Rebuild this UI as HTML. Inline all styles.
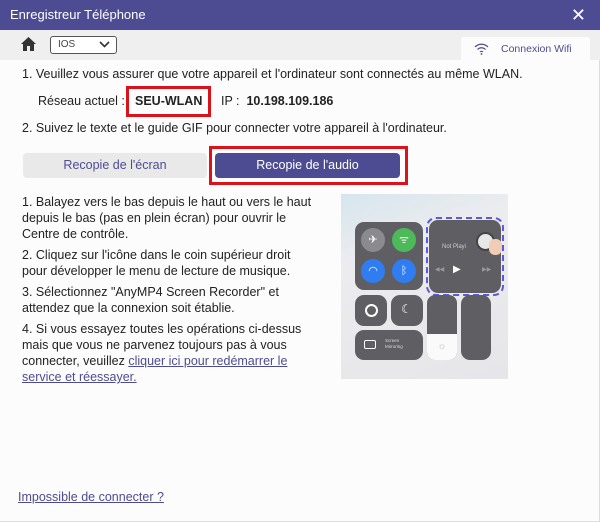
<!DOCTYPE html>
<html><head><meta charset="utf-8"><style>
*{margin:0;padding:0;box-sizing:border-box}
body{width:600px;height:522px;background:#fcfcfc;font-family:"Liberation Sans",sans-serif;font-size:12.5px;color:#222;position:relative;overflow:hidden;border-right:1px solid #ddd;border-bottom:1px solid #ddd}
.abs{position:absolute}
.title{left:0;top:0;width:600px;height:30px;background:#4d4c93;color:#fff;font-size:13px;line-height:30px;padding-left:10px}
.bar{left:0;top:30px;width:600px;height:30px;background:#efefef}
.sel{left:50px;top:36px;width:67px;height:18px;border:1px solid #555;border-radius:3px;background:#fff;font-size:10px;line-height:16px;padding-left:7px;color:#444}
.tab{left:461px;top:37px;width:129px;height:24px;background:#fcfcfc;border-radius:3px 3px 0 0;color:#4d4c93;font-size:10.5px;line-height:24px;padding-left:40px}
.t{left:22px;white-space:nowrap}
.red{border:3px solid #d9121c}
p.l{position:absolute;left:22px;width:320px;line-height:16px;font-size:12.5px;color:#222;white-space:nowrap}
a{color:#4d4c93;text-decoration:underline}
.cc{left:341px;top:194px;width:167px;height:185px;background:linear-gradient(160deg,#d6e6ee 0%,#ececef 30%,#e6e6e9 100%)}
.dk{background:#5f5f63;border-radius:9px;position:absolute}
.c{position:absolute;width:24px;height:24px;border-radius:50%;color:#fff;font-size:11px;text-align:center;line-height:24px}
</style></head><body>
<div class="abs title">Enregistreur Téléphone<span style="position:absolute;right:14px;top:0;font-size:18px">✕</span></div>
<div class="abs bar"></div>
<svg class="abs" style="left:21px;top:37px" width="15" height="14" viewBox="0 0 15 14"><path d="M7.5 0L0 7h2v7h4V9h3v5h4V7h2z" fill="#333"/></svg>
<div class="abs sel">IOS<svg style="position:absolute;right:6px;top:4px" width="11" height="7"><path d="M1 1l4.5 4.5L10 1" stroke="#333" stroke-width="1.6" fill="none"/></svg></div>
<div class="abs tab"><svg style="position:absolute;left:13px;top:6px" width="15" height="12" viewBox="0 0 15 12"><path d="M1 4a9 9 0 0 1 13 0M3.5 6.5a5.5 5.5 0 0 1 8 0M6 9a2 2 0 0 1 3 0" stroke="#4d4c93" stroke-width="1.2" fill="none"/><circle cx="7.5" cy="11" r="0.9" fill="#4d4c93"/></svg>Connexion Wifi</div>
<div class="abs t" style="top:67px">1. Veuillez vous assurer que votre appareil et l'ordinateur sont connectés au même WLAN.</div>
<div class="abs t" style="left:38px;top:94px">Réseau actuel :</div>
<div class="abs red" style="left:126px;top:86px;width:85px;height:31px"></div>
<div class="abs t" style="left:135px;top:94px;font-weight:bold">SEU-WLAN</div>
<div class="abs t" style="left:221px;top:94px">IP :&nbsp;&nbsp;<b>10.198.109.186</b></div>
<div class="abs t" style="top:121px">2. Suivez le texte et le guide GIF pour connecter votre appareil à l'ordinateur.</div>
<div class="abs" style="left:23px;top:153px;width:184px;height:25px;background:#e9e9e9;border-radius:4px;color:#4d4c93;text-align:center;line-height:25px">Recopie de l'écran</div>
<div class="abs red" style="left:209px;top:146px;width:199px;height:39px"></div>
<div class="abs" style="left:215px;top:153px;width:185px;height:25px;background:#4d4c93;border-radius:4px;color:#fff;text-align:center;line-height:25px">Recopie de l'audio</div>
<p class="l" style="top:194px">1. Balayez vers le bas depuis le haut ou vers le haut<br>depuis le bas (pas en plein écran) pour ouvrir le<br>Centre de contrôle.</p>
<p class="l" style="top:247px">2. Cliquez sur l'icône dans le coin supérieur droit<br>pour développer le menu de lecture de musique.</p>
<p class="l" style="top:284px">3. Sélectionnez "AnyMP4 Screen Recorder" et<br>attendez que la connexion soit établie.</p>
<p class="l" style="top:321px">4. Si vous essayez toutes les opérations ci-dessus<br>mais que vous ne parvenez toujours pas à vous<br>connecter, veuillez <a>cliquer ici pour redémarrer le</a><br><a>service et réessayer.</a></p>
<div class="abs cc">
 <div class="dk" style="left:14px;top:28px;width:68px;height:68px"></div>
 <div class="c" style="left:20px;top:34px;background:#8b8b8f">✈</div>
 <div class="c" style="left:51px;top:34px;background:#4cba58">ᯤ</div>
 <div class="c" style="left:20px;top:65px;background:#2f7df1">◠</div>
 <div class="c" style="left:51px;top:65px;background:#2f7df1">ᛒ</div>
 <div style="position:absolute;left:85px;top:23px;width:78px;height:79px;border:2px dashed #5a5ae0;border-radius:10px"></div>
 <div class="dk" style="left:88px;top:26px;width:72px;height:73px"></div>
 <div style="position:absolute;left:101px;top:50px;color:#ccc;font-size:6px">Not Playi</div>
 <div style="position:absolute;left:135px;top:38px;width:19px;height:19px;border-radius:50%;background:#e8e8e8;border:2px solid #444"></div>
 <div style="position:absolute;left:148px;top:45px;width:13px;height:16px;border-radius:6px;background:#f0cdb4"></div>
 <div style="position:absolute;left:112px;top:70px;color:#fff;font-size:10px">▶</div>
 <div style="position:absolute;left:94px;top:72px;color:#999;font-size:6px">◀◀</div>
 <div style="position:absolute;left:141px;top:72px;color:#999;font-size:6px">▶▶</div>
 <div class="dk" style="left:14px;top:101px;width:32px;height:31px"></div>
 <div class="dk" style="left:50px;top:101px;width:32px;height:31px"></div>
 <div style="position:absolute;left:24px;top:110px;width:13px;height:13px;border:2px solid #fff;border-radius:50%"></div>
 <div style="position:absolute;left:60px;top:108px;color:#fff;font-size:12px">☾</div>
 <div class="dk" style="left:14px;top:136px;width:68px;height:30px"></div>
 <div style="position:absolute;left:23px;top:146px;width:12px;height:9px;border:1.5px solid #fff;border-radius:2px"></div>
 <div style="position:absolute;left:44px;top:144px;color:#ddd;font-size:4.5px;line-height:6px">Screen<br>Mirroring</div>
 <div style="position:absolute;left:86px;top:101px;width:30px;height:65px;border-radius:8px;background:#5f5f63;overflow:hidden"><div style="position:absolute;bottom:0;left:0;width:30px;height:26px;background:#fafafa;color:#bbb;text-align:center;line-height:26px;font-size:10px">☼</div></div>
 <div class="dk" style="left:120px;top:101px;width:30px;height:65px"></div>
</div>
<div class="abs t" style="left:18px;top:490px"><a>Impossible de connecter ?</a></div>
</body></html>
